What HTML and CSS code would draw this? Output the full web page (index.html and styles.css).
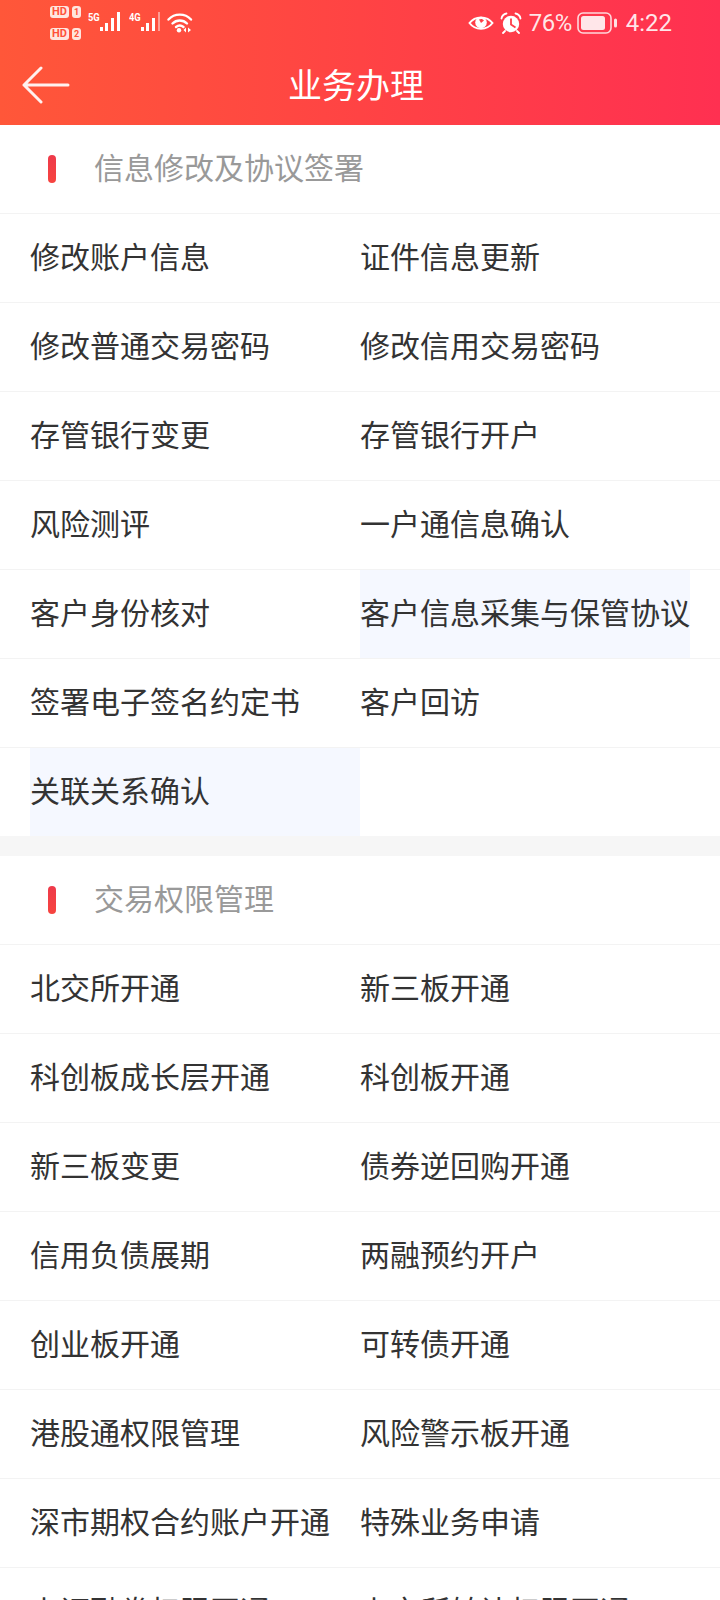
FILE: index.html
```html
<!DOCTYPE html>
<html lang="zh-CN">
<head>
<meta charset="UTF-8">
<meta name="viewport" content="width=device-width, initial-scale=1.0">
<title>业务办理</title>
<link rel="stylesheet" href="styles.css">
</head>
<body>
<header class="top">
    <div class="status">
        <div class="status-left">
            <div class="sims">
                <div class="sim"><span class="hd">HD</span><span class="num">1</span></div>
                <div class="sim"><span class="hd">HD</span><span class="num">2</span></div>
            </div>
            <div class="signal">
                <span class="net">5G</span>
                <svg width="22" height="20" viewBox="0 0 22 20"><g fill="#fff"><rect x="0" y="15" width="3" height="4"/><rect x="5" y="11" width="3" height="8"/><rect x="11" y="6" width="3" height="13"/><rect x="17" y="0" width="3" height="19"/></g></svg>
            </div>
            <div class="signal">
                <span class="net">4G</span>
                <svg width="22" height="20" viewBox="0 0 22 20"><g fill="#fff"><rect x="0" y="15" width="3" height="4"/><rect x="5" y="11" width="3" height="8"/><rect x="11" y="6" width="3" height="13"/><rect x="17" y="0" width="2" height="19" opacity=".45"/></g></svg>
            </div>
            <svg class="wifi" width="26" height="21" viewBox="0 0 26 21"><g fill="none" stroke="#fff" stroke-width="2.4" stroke-linecap="round"><path d="M1.5 7.5C7.5 1 18 1 24 7.5"/><path d="M5.5 11.5C9.5 7.5 16 7.5 20 11.5"/><path d="M9 15C11.5 13 14 13 16.5 15"/></g><circle cx="12" cy="18.3" r="2.2" fill="#fff"/><path d="M19 15.5v5l-2.5-2.5zM21 15.5v5l3-2.5z" fill="#fff"/></svg>
        </div>
        <div class="status-right">
            <svg class="eye" width="26" height="18" viewBox="0 0 26 18"><path d="M1.5 9C7 1.5 19 1.5 24.5 9 19 16.5 7 16.5 1.5 9Z" fill="none" stroke="#fff" stroke-width="2"/><circle cx="13" cy="8.5" r="5.8" fill="#fff"/><path d="M11 5.5c2-1.2 4-.5 5 1l-3 2.5z" fill="#ff4048"/></svg>
            <svg class="alarm" width="22" height="22" viewBox="0 0 22 22"><circle cx="11" cy="12" r="8.2" fill="#fff"/><path d="M1.5 6.5C2 3.5 4 2 6.5 1.5M20.5 6.5C20 3.5 18 2 15.5 1.5M5 19l-2 2M17 19l2 2" fill="none" stroke="#fff" stroke-width="1.8" stroke-linecap="round"/><path d="M11 6.5V12.5L15.5 15.500" fill="none" stroke="#ff3d4a" stroke-width="1.8"/></svg>
            <span class="pct">76%</span>
            <svg class="battery" width="41" height="22" viewBox="0 0 41 22"><rect x="1" y="1" width="33" height="20" rx="5" fill="none" stroke="#fff" stroke-opacity=".8" stroke-width="1.6"/><rect x="4" y="4" width="24" height="14" rx="2.5" fill="#fff" fill-opacity=".88"/><rect x="37" y="6.5" width="3" height="9" rx="1.5" fill="#fff" fill-opacity=".85"/></svg>
            <span class="clock">4:22</span>
        </div>
    </div>
    <div class="nav">
        <svg class="back" width="48" height="38" viewBox="0 0 48 38"><path d="M19 2 2 19l17 17M2 19h44" fill="none" stroke="#fff" stroke-opacity=".92" stroke-width="3" stroke-linecap="round" stroke-linejoin="round"/></svg>
        <h1 class="title">业务办理</h1>
    </div>
</header>

<section class="group">
    <div class="group-head"><i class="mark"></i><span class="group-name">信息修改及协议签署</span></div>
    <div class="row"><a class="cell">修改账户信息</a><a class="cell">证件信息更新</a></div>
    <div class="row"><a class="cell">修改普通交易密码</a><a class="cell">修改信用交易密码</a></div>
    <div class="row"><a class="cell">存管银行变更</a><a class="cell">存管银行开户</a></div>
    <div class="row"><a class="cell">风险测评</a><a class="cell">一户通信息确认</a></div>
    <div class="row"><a class="cell">客户身份核对</a><a class="cell active">客户信息采集与保管协议</a></div>
    <div class="row"><a class="cell">签署电子签名约定书</a><a class="cell">客户回访</a></div>
    <div class="row last"><a class="cell active">关联关系确认</a><a class="cell"></a></div>
</section>

<section class="group">
    <div class="group-head"><i class="mark"></i><span class="group-name">交易权限管理</span></div>
    <div class="row"><a class="cell">北交所开通</a><a class="cell">新三板开通</a></div>
    <div class="row"><a class="cell">科创板成长层开通</a><a class="cell">科创板开通</a></div>
    <div class="row"><a class="cell">新三板变更</a><a class="cell">债券逆回购开通</a></div>
    <div class="row"><a class="cell">信用负债展期</a><a class="cell">两融预约开户</a></div>
    <div class="row"><a class="cell">创业板开通</a><a class="cell">可转债开通</a></div>
    <div class="row"><a class="cell">港股通权限管理</a><a class="cell">风险警示板开通</a></div>
    <div class="row"><a class="cell">深市期权合约账户开通</a><a class="cell">特殊业务申请</a></div>
    <div class="row"><a class="cell">上证融券权限开通</a><a class="cell">上交所转让权限开通</a></div>
</section>
</body>
</html>
```

FILE: styles.css
```css
body {
    font-family: "Noto Sans CJK SC", "Noto Sans", sans-serif;
    margin: 0;
    padding: 0;
    height: 1600px;
    overflow: hidden;
    background-color: #f6f6f6;
}
.top {
    height: 125px;
    color: #fff;
    background: linear-gradient(90deg, #ff5739 0%, #ff4344 50%, #ff3051 100%);
}
.status {
    height: 45px;
    padding: 0 48px 0 50px;
    display: flex;
    justify-content: space-between;
}
.status-left {
    display: flex;
    align-items: flex-start;
}
.status-right {
    display: flex;
    align-items: center;
    padding-top: 1px;
    font-family: Roboto, sans-serif;
    font-size: 24px;
    color: rgba(255, 255, 255, 0.88);
    height: 44px;
}
.sims {
    width: 38px;
    padding-top: 6px;
}
.sim {
    height: 12px;
    margin-bottom: 10px;
    display: flex;
    align-items: center;
    gap: 3px;
}
.hd,
.num {
    height: 12px;
    line-height: 12px;
    font-family: Roboto, sans-serif;
    font-size: 11px;
    font-weight: 700;
    text-align: center;
    color: #ff5239;
    background-color: #ffe6df;
    border-radius: 3px;
}
.hd {
    width: 19px;
}
.num {
    width: 9px;
    font-size: 9px;
}
.signal {
    display: flex;
    align-items: flex-start;
    margin-top: 12px;
    color: #fff;
}
.net {
    width: 11px;
    font-family: Roboto, sans-serif;
    font-size: 11px;
    font-weight: 700;
    line-height: 11px;
    transform: scaleX(0.85);
    transform-origin: left;
}
.signal svg {
    margin-left: 1px;
}
.signal + .signal {
    margin-left: 7px;
}
.wifi {
    margin: 12px 0 0 4px;
}
.alarm {
    margin-left: 6px;
}
.pct {
    margin-left: 7px;
    width: 42px;
    letter-spacing: -0.5px;
}
.battery {
    margin-left: 6px;
}
.clock {
    margin-left: 8px;
}
.nav {
    height: 80px;
    padding-right: 8px;
    position: relative;
    display: flex;
    justify-content: center;
    align-items: center;
}
.back {
    position: absolute;
    left: 22px;
    top: 21px;
}
.title {
    margin: 0 0 3px;
    font-size: 34px;
    font-weight: 400;
}
.group {
    background-color: #fff;
    margin-bottom: 20px;
}
.group-head {
    height: 88px;
    display: flex;
    align-items: center;
    padding-left: 48px;
    font-size: 30px;
    color: #999;
    border-bottom: 1px solid #f3f3f3;
}
.group-name {
    margin-bottom: 6px;
}
.mark {
    width: 8px;
    height: 28px;
    margin-right: 38px;
    border-radius: 4px;
    background: linear-gradient(180deg, #ee3a4a, #f7443f);
}
.row {
    height: 88px;
    padding: 0 30px;
    display: grid;
    grid-template-columns: 330px 330px;
    border-bottom: 1px solid #f3f3f3;
}
.row.last {
    border-bottom: none;
}
.cell {
    font-size: 30px;
    line-height: 82px;
    color: #333;
    white-space: nowrap;
}
.cell.active {
    background-color: #f5f8ff;
}
```
